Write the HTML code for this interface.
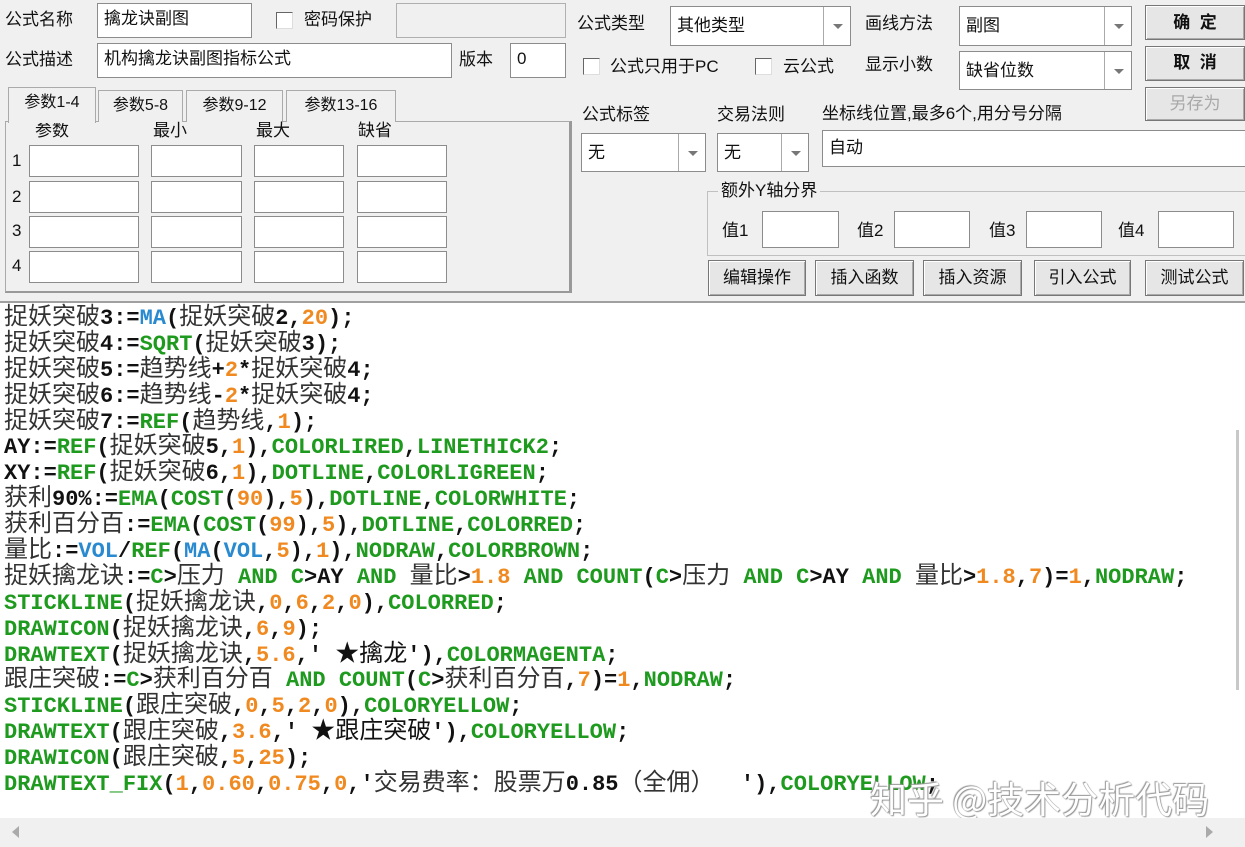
<!DOCTYPE html>
<html><head><meta charset="utf-8">
<style>
*{margin:0;padding:0;box-sizing:border-box}
body{width:1245px;height:847px;background:#f0f0f0;position:relative;overflow:hidden;font-family:"Liberation Sans","Noto Sans CJK SC",sans-serif;font-size:17px;color:#111}
.a{position:absolute;white-space:nowrap}
.t{position:absolute;white-space:nowrap;line-height:20px}
.in{position:absolute;background:#fff;border:1px solid #8c8c8c;padding-left:6px;line-height:30px;font-size:17px}
.dis{background:#f0f0f0;border-color:#b0b0b0}
.cb{position:absolute;width:17px;height:17px;background:#fff;border:1px solid #666;border-right-color:#ddd;border-bottom-color:#ddd}
.combo{position:absolute;background:#fff;border:1px solid #8c8c8c;padding-left:6px;font-size:17px}
.combo .ar{position:absolute;right:0;top:0;bottom:0;width:27px;border-left:1px solid #aaa}
.combo .ar:after{content:"";position:absolute;left:9px;top:50%;margin-top:-2px;border-left:5px solid transparent;border-right:5px solid transparent;border-top:5px solid #777}
.btn{position:absolute;background:#e6e6e6;border:1px solid #777;box-shadow:inset 1px 1px 0 #fff,inset -1px -1px 0 #aaa;text-align:center;font-weight:bold;font-size:17px}
.tab{position:absolute;top:90px;height:32px;border:1px solid #aaa;border-bottom:none;background:#f0f0f0;font-size:16px;text-align:center;line-height:30px}
#ed{position:absolute;left:0;top:301px;width:1245px;height:517px;background:#fff;border-top:2px solid #a0a0a0;padding:3px 0 0 4px}
.ln{height:25.9px;line-height:25.9px;white-space:pre;font:bold 22px "Liberation Mono",monospace;color:#111;overflow:visible}
.c{font:400 24px "Noto Sans CJK SC",sans-serif;line-height:0;color:#333;vertical-align:baseline}
.g{color:#1e9a1e}.o{color:#f08a20}.b{color:#2a8ad0}
</style></head><body>
<div class="t" style="left:5px;top:10px">公式名称</div>
<div class="in" style="left:97px;top:3px;width:155px;height:35px">擒龙诀副图</div>
<div class="cb" style="left:276px;top:12px"></div>
<div class="t" style="left:304px;top:10px">密码保护</div>
<div class="in dis" style="left:396px;top:3px;width:170px;height:35px"></div>
<div class="t" style="left:5px;top:50px">公式描述</div>
<div class="in" style="left:97px;top:43px;width:355px;height:35px">机构擒龙诀副图指标公式</div>
<div class="t" style="left:459px;top:50px">版本</div>
<div class="in" style="left:510px;top:43px;width:56px;height:35px">0</div>
<div style="position:absolute;left:5px;top:121px;width:566px;height:172px;border:1px solid #aaa;border-right:2px solid #999;border-bottom:2px solid #999"></div>
<div class="tab" style="left:8px;top:87px;width:88px;height:36px;background:#f0f0f0;z-index:2">参数1-4</div>
<div class="tab" style="left:98px;width:85px">参数5-8</div>
<div class="tab" style="left:186px;width:97px">参数9-12</div>
<div class="tab" style="left:286px;width:110px">参数13-16</div>
<div class="t" style="left:35px;top:121px">参数</div>
<div class="t" style="left:153px;top:121px">最小</div>
<div class="t" style="left:256px;top:121px">最大</div>
<div class="t" style="left:358px;top:121px">缺省</div>
<div class="t" style="left:12px;top:151px">1</div>
<div class="t" style="left:12px;top:187px">2</div>
<div class="t" style="left:12px;top:221px">3</div>
<div class="t" style="left:12px;top:256px">4</div>
<div class="in" style="left:29px;top:145px;width:110px;height:32px"></div><div class="in" style="left:151px;top:145px;width:91px;height:32px"></div><div class="in" style="left:254px;top:145px;width:90px;height:32px"></div><div class="in" style="left:357px;top:145px;width:90px;height:32px"></div>
<div class="in" style="left:29px;top:181px;width:110px;height:32px"></div><div class="in" style="left:151px;top:181px;width:91px;height:32px"></div><div class="in" style="left:254px;top:181px;width:90px;height:32px"></div><div class="in" style="left:357px;top:181px;width:90px;height:32px"></div>
<div class="in" style="left:29px;top:216px;width:110px;height:32px"></div><div class="in" style="left:151px;top:216px;width:91px;height:32px"></div><div class="in" style="left:254px;top:216px;width:90px;height:32px"></div><div class="in" style="left:357px;top:216px;width:90px;height:32px"></div>
<div class="in" style="left:29px;top:251px;width:110px;height:32px"></div><div class="in" style="left:151px;top:251px;width:91px;height:32px"></div><div class="in" style="left:254px;top:251px;width:90px;height:32px"></div><div class="in" style="left:357px;top:251px;width:90px;height:32px"></div>
<div class="t" style="left:577px;top:14px">公式类型</div>
<div class="combo" style="left:670px;top:6px;width:181px;height:40px;line-height:38px">其他类型<div class="ar"></div></div>
<div class="t" style="left:865px;top:14px">画线方法</div>
<div class="combo" style="left:959px;top:6px;width:173px;height:40px;line-height:38px">副图<div class="ar"></div></div>
<div class="btn" style="left:1145px;top:5px;width:100px;height:35px;line-height:33px">确&nbsp;&nbsp;定</div>
<div class="btn" style="left:1145px;top:46px;width:100px;height:35px;line-height:31px">取&nbsp;&nbsp;消</div>
<div class="btn" style="left:1145px;top:87px;width:100px;height:34px;line-height:32px;color:#a8a8a8;font-weight:normal">另存为</div>
<div class="cb" style="left:583px;top:58px"></div>
<div class="t" style="left:610px;top:57px">公式只用于PC</div>
<div class="cb" style="left:755px;top:58px"></div>
<div class="t" style="left:783px;top:57px">云公式</div>
<div class="t" style="left:865px;top:55px">显示小数</div>
<div class="combo" style="left:959px;top:51px;width:173px;height:39px;line-height:38px">缺省位数<div class="ar"></div></div>
<div style="position:absolute;left:571px;top:121px;width:1px;height:172px;background:#999"></div>
<div class="t" style="left:582px;top:105px">公式标签</div>
<div class="t" style="left:717px;top:105px">交易法则</div>
<div class="t" style="left:822px;top:104px">坐标线位置,最多6个,用分号分隔</div>
<div class="combo" style="left:581px;top:133px;width:125px;height:39px;line-height:38px">无<div class="ar"></div></div>
<div class="combo" style="left:717px;top:133px;width:92px;height:39px;line-height:38px">无<div class="ar"></div></div>
<div class="in" style="left:822px;top:130px;width:430px;height:37px;line-height:34px">自动</div>
<div style="position:absolute;left:707px;top:191px;width:545px;height:65px;border:1px solid #c0c0c0"></div>
<div class="t" style="left:718px;top:181px;background:#f0f0f0;padding:0 3px">额外Y轴分界</div>
<div class="t" style="left:722px;top:221px">值1</div><div class="in" style="left:762px;top:211px;width:77px;height:37px"></div>
<div class="t" style="left:857px;top:221px">值2</div><div class="in" style="left:894px;top:211px;width:76px;height:37px"></div>
<div class="t" style="left:989px;top:221px">值3</div><div class="in" style="left:1026px;top:211px;width:76px;height:37px"></div>
<div class="t" style="left:1118px;top:221px">值4</div><div class="in" style="left:1158px;top:211px;width:76px;height:37px"></div>
<div class="btn" style="left:708px;top:260px;width:98px;height:36px;line-height:34px;font-weight:normal">编辑操作</div>
<div class="btn" style="left:815px;top:260px;width:99px;height:36px;line-height:34px;font-weight:normal">插入函数</div>
<div class="btn" style="left:923px;top:260px;width:99px;height:36px;line-height:34px;font-weight:normal">插入资源</div>
<div class="btn" style="left:1034px;top:260px;width:97px;height:36px;line-height:34px;font-weight:normal">引入公式</div>
<div class="btn" style="left:1145px;top:260px;width:99px;height:36px;line-height:34px;font-weight:normal">测试公式</div>
<div id="ed">
<div class="ln"><span class="c">捉妖突破</span>3:=<span class="b">MA</span>(<span class="c">捉妖突破</span>2,<span class="o">20</span>);</div>
<div class="ln"><span class="c">捉妖突破</span>4:=<span class="g">SQRT</span>(<span class="c">捉妖突破</span>3);</div>
<div class="ln"><span class="c">捉妖突破</span>5:=<span class="c">趋势线</span>+<span class="o">2</span>*<span class="c">捉妖突破</span>4;</div>
<div class="ln"><span class="c">捉妖突破</span>6:=<span class="c">趋势线</span>-<span class="o">2</span>*<span class="c">捉妖突破</span>4;</div>
<div class="ln"><span class="c">捉妖突破</span>7:=<span class="g">REF</span>(<span class="c">趋势线</span>,<span class="o">1</span>);</div>
<div class="ln">AY:=<span class="g">REF</span>(<span class="c">捉妖突破</span>5,<span class="o">1</span>),<span class="g">COLORLIRED</span>,<span class="g">LINETHICK2</span>;</div>
<div class="ln">XY:=<span class="g">REF</span>(<span class="c">捉妖突破</span>6,<span class="o">1</span>),<span class="g">DOTLINE</span>,<span class="g">COLORLIGREEN</span>;</div>
<div class="ln"><span class="c">获利</span>90%:=<span class="g">EMA</span>(<span class="g">COST</span>(<span class="o">90</span>),<span class="o">5</span>),<span class="g">DOTLINE</span>,<span class="g">COLORWHITE</span>;</div>
<div class="ln"><span class="c">获利百分百</span>:=<span class="g">EMA</span>(<span class="g">COST</span>(<span class="o">99</span>),<span class="o">5</span>),<span class="g">DOTLINE</span>,<span class="g">COLORRED</span>;</div>
<div class="ln"><span class="c">量比</span>:=<span class="b">VOL</span>/<span class="g">REF</span>(<span class="b">MA</span>(<span class="b">VOL</span>,<span class="o">5</span>),<span class="o">1</span>),<span class="g">NODRAW</span>,<span class="g">COLORBROWN</span>;</div>
<div class="ln"><span class="c">捉妖擒龙诀</span>:=<span class="g">C</span>&gt;<span class="c">压力</span> <span class="g">AND</span> <span class="g">C</span>&gt;AY <span class="g">AND</span> <span class="c">量比</span>&gt;<span class="o">1.8</span> <span class="g">AND</span> <span class="g">COUNT</span>(<span class="g">C</span>&gt;<span class="c">压力</span> <span class="g">AND</span> <span class="g">C</span>&gt;AY <span class="g">AND</span> <span class="c">量比</span>&gt;<span class="o">1.8</span>,<span class="o">7</span>)=<span class="o">1</span>,<span class="g">NODRAW</span>;</div>
<div class="ln"><span class="g">STICKLINE</span>(<span class="c">捉妖擒龙诀</span>,<span class="o">0</span>,<span class="o">6</span>,<span class="o">2</span>,<span class="o">0</span>),<span class="g">COLORRED</span>;</div>
<div class="ln"><span class="g">DRAWICON</span>(<span class="c">捉妖擒龙诀</span>,<span class="o">6</span>,<span class="o">9</span>);</div>
<div class="ln"><span class="g">DRAWTEXT</span>(<span class="c">捉妖擒龙诀</span>,<span class="o">5.6</span>,' <span class="c" style="color:#111">★擒龙</span>'),<span class="g">COLORMAGENTA</span>;</div>
<div class="ln"><span class="c">跟庄突破</span>:=<span class="g">C</span>&gt;<span class="c">获利百分百</span> <span class="g">AND</span> <span class="g">COUNT</span>(<span class="g">C</span>&gt;<span class="c">获利百分百</span>,<span class="o">7</span>)=<span class="o">1</span>,<span class="g">NODRAW</span>;</div>
<div class="ln"><span class="g">STICKLINE</span>(<span class="c">跟庄突破</span>,<span class="o">0</span>,<span class="o">5</span>,<span class="o">2</span>,<span class="o">0</span>),<span class="g">COLORYELLOW</span>;</div>
<div class="ln"><span class="g">DRAWTEXT</span>(<span class="c">跟庄突破</span>,<span class="o">3.6</span>,' <span class="c" style="color:#111">★跟庄突破</span>'),<span class="g">COLORYELLOW</span>;</div>
<div class="ln"><span class="g">DRAWICON</span>(<span class="c">跟庄突破</span>,<span class="o">5</span>,<span class="o">25</span>);</div>
<div class="ln"><span class="g">DRAWTEXT_FIX</span>(<span class="o">1</span>,<span class="o">0.60</span>,<span class="o">0.75</span>,<span class="o">0</span>,'<span class="c">交易费率：股票万</span>0.85<span class="c">（全佣）</span>  '),<span class="g">COLORYELLOW</span>;</div>
</div>
<div style="position:absolute;left:1236px;top:430px;width:3px;height:260px;background:#c8c8c8"></div>
<div class="a" style="left:870px;top:770px;font:400 37px 'Noto Sans CJK SC',sans-serif;color:#fff;text-shadow:0 0 1px #888,1px 1px 1px #999,-1px -1px 1px #999">知乎 @技术分析代码</div>
<div style="position:absolute;left:0;top:818px;width:1245px;height:29px;background:#f0f0f0"></div>
<div style="position:absolute;left:12px;top:826px;border-top:6px solid transparent;border-bottom:6px solid transparent;border-right:7px solid #aaa"></div>
<div style="position:absolute;left:1206px;top:826px;border-top:6px solid transparent;border-bottom:6px solid transparent;border-left:7px solid #aaa"></div>
</body></html>
